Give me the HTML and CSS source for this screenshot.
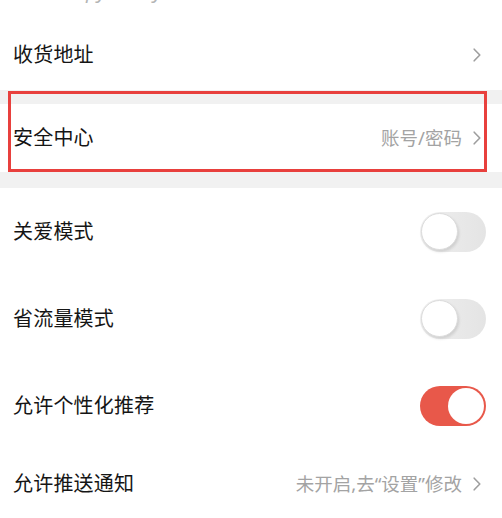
FILE: index.html
```html
<!DOCTYPE html>
<html lang="zh-CN">
<head>
<meta charset="utf-8">
<title>设置</title>
<link rel="stylesheet" href="styles.css">
</head>
<body>
<div class="page">
  <div class="prev-clip"><span class="prev-text">py&nbsp;&nbsp;&nbsp;&nbsp;&nbsp;&nbsp;&nbsp;&nbsp;&nbsp;y</span></div>

  <div class="row row-text">
    <span class="title">收货地址</span>
    <span class="right"><svg class="chev" viewBox="0 0 8 14" width="8" height="14"><polyline points="1.2,1.2 6.8,7 1.2,12.8"/></svg></span>
  </div>

  <div class="gap gap-a"></div>

  <div class="row row-text row-secure">
    <span class="title">安全中心</span>
    <span class="right"><span class="sub">账号/密码</span><svg class="chev" viewBox="0 0 8 14" width="8" height="14"><polyline points="1.2,1.2 6.8,7 1.2,12.8"/></svg></span>
    <div class="highlight"></div>
  </div>

  <div class="gap gap-b"></div>

  <div class="row row-toggle">
    <span class="title">关爱模式</span>
    <span class="switch"><span class="knob"></span></span>
  </div>

  <div class="row row-toggle">
    <span class="title">省流量模式</span>
    <span class="switch"><span class="knob"></span></span>
  </div>

  <div class="row row-toggle">
    <span class="title">允许个性化推荐</span>
    <span class="switch on"><span class="knob"></span></span>
  </div>

  <div class="row row-text">
    <span class="title">允许推送通知</span>
    <span class="right"><span class="sub">未开启,去“设置”修改</span><svg class="chev" viewBox="0 0 8 14" width="8" height="14"><polyline points="1.2,1.2 6.8,7 1.2,12.8"/></svg></span>
  </div>
</div>
</body>
</html>
```

FILE: styles.css
```css
html, body {
  margin: 0;
  padding: 0;
  background: #ffffff;
}

body {
  font-family: "Noto Sans", "Noto Sans CJK SC", sans-serif;
  color: #151515;
  overflow: hidden;
}

.page {
  width: 502px;
}

.prev-clip {
  height: 20px;
  overflow: hidden;
}

.prev-text {
  display: block;
  margin-top: -22px;
  padding-left: 86px;
  font-size: 20px;
  line-height: 26px;
  font-style: italic;
  color: #b5b5b5;
}

.row {
  display: flex;
  align-items: center;
  justify-content: space-between;
  padding: 0 16px 0 13px;
  background: #ffffff;
}

.row-text {
  height: 70px;
}

.row-secure {
  height: 68px;
  position: relative;
}

.row-toggle {
  height: 87px;
}

.title {
  font-size: 20px;
  font-weight: 400;
  line-height: 24px;
  letter-spacing: 0.2px;
}

.right {
  display: flex;
  align-items: center;
  gap: 11px;
  padding-right: 5px;
}

.sub {
  font-size: 18.5px;
  line-height: 22px;
  color: #a3a3a3;
}

.chev {
  display: block;
}

.chev polyline {
  fill: none;
  stroke: #9e9e9e;
  stroke-width: 1.6;
  stroke-linecap: round;
  stroke-linejoin: round;
}

.gap {
  background: #f1f1f1;
}

.gap-a {
  height: 14px;
}

.gap-b {
  height: 16px;
}

.highlight {
  position: absolute;
  left: 8px;
  right: 15px;
  top: -13px;
  bottom: 0;
  border: 3px solid #e8403d;
  pointer-events: none;
}

.switch {
  position: relative;
  width: 66px;
  height: 40px;
  border-radius: 20px;
  background: linear-gradient(90deg, #efefef, #e4e4e4);
  box-sizing: border-box;
  flex: none;
}

.knob {
  position: absolute;
  left: 1px;
  top: 1px;
  width: 37px;
  height: 37px;
  border-radius: 50%;
  background: #ffffff;
  box-sizing: border-box;
  border: 1px solid #dcdcdc;
  box-shadow: 1px 2px 3px rgba(0, 0, 0, 0.12);
}

.switch.on {
  background: #e8584a;
}

.switch.on .knob {
  left: auto;
  right: 2px;
  top: 2px;
  width: 36px;
  height: 36px;
  border: none;
  box-shadow: none;
}
```
